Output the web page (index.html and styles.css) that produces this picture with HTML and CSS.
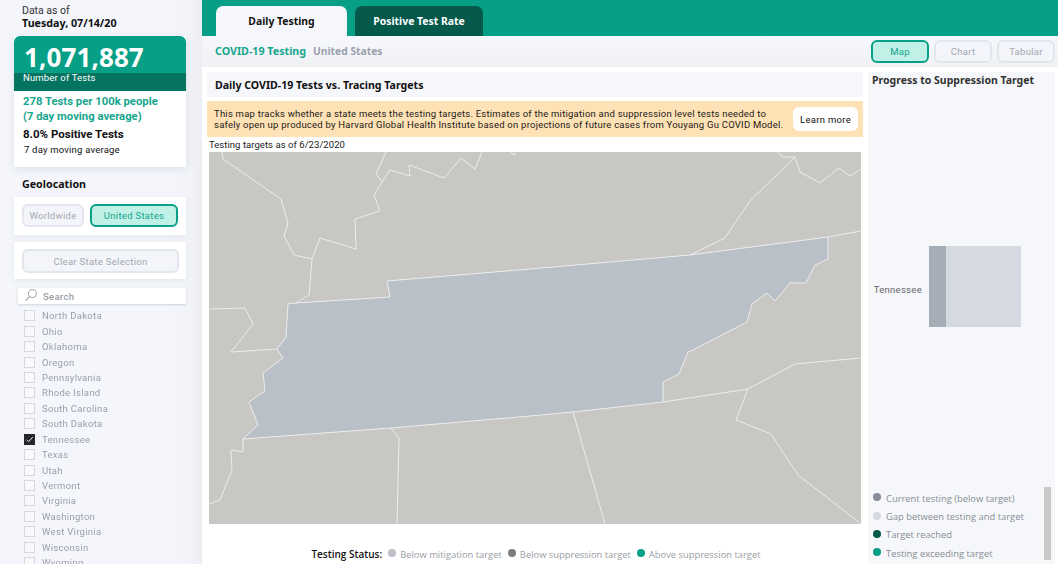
FILE: index.html
```html
<!DOCTYPE html>
<html lang="en">
<head>
<meta charset="utf-8">
<title>COVID-19 Testing</title>
<link rel="stylesheet" href="styles.css">
</head>
<body>
<div class="app">
  <aside class="sidebar">
    <div class="asof">
      <div class="asof-label">Data as of</div>
      <div class="asof-date">Tuesday, 07/14/20</div>
    </div>
    <section class="kpi">
      <div class="kpi-top">
        <div class="kpi-num">1,071,887</div>
        <div class="kpi-band">Number of Tests</div>
      </div>
      <div class="kpi-body">
        <div class="kpi-green">278 Tests per 100k people<br>(7 day moving average)</div>
        <div class="kpi-black">8.0% Positive Tests</div>
        <div class="kpi-small">7 day moving average</div>
      </div>
    </section>
    <h2 class="geo">Geolocation</h2>
    <div class="card geo-btns">
      <button class="btn worldwide">Worldwide</button>
      <button class="btn btn-on us">United States</button>
    </div>
    <div class="card clear-card">
      <button class="btn clear">Clear State Selection</button>
    </div>
    <div class="search">
      <svg class="search-ico" width="14" height="14" viewBox="0 0 14 14"><circle cx="8.5" cy="5.5" r="4" fill="none" stroke="#a9aeb6" stroke-width="1.1"/><path d="M5.6 8.4 1.5 12.8" stroke="#a9aeb6" stroke-width="1.3" fill="none"/></svg>
      <span>Search</span>
    </div>
    <ul class="states">
      <li class="ghost"><i></i></li>
      <li><i></i>North Dakota</li>
      <li><i></i>Ohio</li>
      <li><i></i>Oklahoma</li>
      <li><i></i>Oregon</li>
      <li><i></i>Pennsylvania</li>
      <li><i></i>Rhode Island</li>
      <li><i></i>South Carolina</li>
      <li><i></i>South Dakota</li>
      <li><i class="checked"><svg width="9" height="9" viewBox="0 0 9 9"><path d="M1.5 4.8 3.5 6.8 7.8 2" fill="none" stroke="#e8e8e8" stroke-width="1"/></svg></i>Tennessee</li>
      <li><i></i>Texas</li>
      <li><i></i>Utah</li>
      <li><i></i>Vermont</li>
      <li><i></i>Virginia</li>
      <li><i></i>Washington</li>
      <li><i></i>West Virginia</li>
      <li><i></i>Wisconsin</li>
      <li><i></i>Wyoming</li>
    </ul>
  </aside>
  <main class="main">
    <nav class="tabs">
      <div class="tab tab-on">Daily Testing</div>
      <div class="tab tab-off">Positive Test Rate</div>
    </nav>
    <header class="subhead">
      <div class="crumbs"><span class="crumb-a">COVID-19 Testing</span><span class="crumb-b">United States</span></div>
      <div class="views">
        <button class="btn view btn-on">Map</button>
        <button class="btn view">Chart</button>
        <button class="btn view">Tabular</button>
      </div>
    </header>
    <div class="content">
      <div class="left">
        <h1 class="title">Daily COVID-19 Tests vs. Tracing Targets</h1>
        <div class="notice">
          <p>This map tracks whether a state meets the testing targets. Estimates of the mitigation and suppression level tests needed to safely open up produced by Harvard Global Health Institute based on projections of future cases from Youyang Gu COVID Model.</p>
          <button class="learn">Learn more</button>
        </div>
        <div class="targets">Testing targets as of 6/23/2020</div>
        <svg class="map" viewBox="209 152 652 372" preserveAspectRatio="none">
          <rect x="209" y="152" width="652" height="372" fill="#c8c7c4"/>
          <polygon class="tn" points="288,304 296,303 390,297 387,281 530,269 690,255 828,237 828,259 815,265 806,283 790,283 775,301 767,293 752,304 747,322 693,350 688,352 679,374 663,382 663,402 573,412 530,416 391,428 243,439 258,425 249,402 265,391 263,373 283,358 277,349 286,337"/>
          <polyline class="b" points="222,152 223,159 281,199 288,223 284,236 294,255 312,259 309,295 296,303"/>
          <polyline class="b" points="312,259 320,238 356,249 355,219 380,211 374,195 382,182 390,170 410,176 409,165 444,178 461,158 475,169 482,152"/>
          <polyline class="b" points="386,152 376,174 382,182"/>
          <polyline class="b" points="511,152 514,155 516,152"/>
          <polyline class="b" points="209,309 245,308 253,324 231,352 277,349"/>
          <polyline class="b" points="243,439 243,452 231,450 232,470 220,500 209,504"/>
          <polyline class="b" points="391,428 399,438 397,524"/>
          <polyline class="b" points="573,412 605,524"/>
          <polyline class="b" points="663,402 748,389 795,364 861,358"/>
          <polyline class="b" points="748,389 736,420 771,434 798,475 860,523"/>
          <polyline class="b" points="690,255 725,238 749,202 795,157 800,172 820,183 839,168 850,176 861,169"/>
          <polyline class="b" points="777,152 783,157 795,157"/>
          <polyline class="b" points="828,237 861,231"/>
        </svg>
        <div class="status">
          <strong>Testing Status:</strong>
          <span class="item"><i class="dot d-light"></i>Below mitigation target</span>
          <span class="item"><i class="dot d-grey"></i>Below suppression target</span>
          <span class="item"><i class="dot d-green"></i>Above suppression target</span>
        </div>
      </div>
      <aside class="progress">
        <h2 class="progress-title">Progress to Suppression Target</h2>
        <div class="bar-row">
          <span class="bar-label">Tennessee</span>
          <div class="bar"><div class="bar-a"></div><div class="bar-b"></div></div>
        </div>
        <div class="legend-wrap">
          <ul class="legend">
            <li><i class="dot d-slate"></i>Current testing (below target)</li>
            <li><i class="dot d-pale"></i>Gap between testing and target</li>
            <li><i class="dot d-dark"></i>Target reached</li>
            <li><i class="dot d-green"></i>Testing exceeding target</li>
          </ul>
          <div class="scroll"></div>
        </div>
      </aside>
    </div>
  </main>
</div>
</body>
</html>
```
FILE: styles.css
```css
* { box-sizing: border-box; }
html, body { margin: 0; padding: 0; height: 564px; overflow: hidden; background: #fff; }
body { font-family: "Roboto", "Liberation Sans", sans-serif; color: #111; }
ul { list-style: none; margin: 0; padding: 0; }
h1, h2, p { margin: 0; }
button { font-family: inherit; }
i { display: block; }

.app { display: flex; width: 1058px; height: 564px; }

.sidebar {
  width: 202px; flex: none; height: 564px; overflow: hidden;
  background: linear-gradient(90deg, #f4f6fb 0, #f4f6fb 170px, #f1f3f8 190px, #eceef3 202px);
  padding-top: 5px;
}
.asof { padding-left: 22px; height: 31px; }
.asof-label { font-size: 10.5px; line-height: 12px; color: #333; }
.asof-date { font-size: 10.7px; line-height: 13px; font-weight: 700; font-family: "Noto Sans", sans-serif; }

.kpi { margin-left: 14px; width: 172px; height: 131px; background: #fff; box-shadow: 0 2px 8px rgba(120,130,150,.18); }
.kpi-top { height: 55px; background: #07a086; border-radius: 6px 6px 0 0; color: #fff; overflow: hidden; }
.kpi-num { font-family: "Noto Sans", sans-serif; font-size: 26px; line-height: 26px; height: 37px; font-weight: 700; padding: 8px 0 0 10px; letter-spacing: .1px; }
.kpi-band { height: 18px; background: #04735f; font-size: 9.5px; line-height: 10px; padding-left: 9px; letter-spacing: .15px; }
.kpi-body { padding: 3px 0 0 9px; }
.kpi-green { font-size: 11.3px; line-height: 15px; font-weight: 700; color: #16a68d; }
.kpi-black { font-size: 11.5px; line-height: 16px; font-weight: 700; margin-top: 2px; }
.kpi-small { font-size: 9.5px; line-height: 12px; margin: 2px 0 0 1px; letter-spacing: .2px; }

.geo { font-family: "Noto Sans", sans-serif; font-size: 10.7px; line-height: 14px; font-weight: 700; margin: 10px 0 0 22px; height: 20px; }
.card { margin-left: 14px; width: 172px; background: #fff; box-shadow: 0 2px 6px rgba(120,130,150,.12); }
.geo-btns { height: 38px; display: flex; gap: 6px; padding: 7px 0 0 8px; }
.btn { height: 23px; border: 2px solid #e4e6ee; border-radius: 6px; background: #f4f5fa; color: #a3a8b1; font-size: 9.5px; padding: 0; letter-spacing: .3px; }
.btn-on { background: #c1f0e6; border-color: #0aa088; color: #14a58c; }
.worldwide { width: 62px; }
.us { width: 88px; }
.clear-card { margin-top: 7px; height: 37px; padding: 7px 0 0 8px; }
.clear { width: 157px; height: 24px; }

.search { margin: 9px 0 0 18px; width: 168px; height: 16px; background: #fff; box-shadow: 0 1px 2px rgba(120,130,150,.3); display: flex; align-items: center; gap: 5px; padding-left: 6px; font-size: 9.5px; font-weight: 500; color: #9a9fa8; letter-spacing: .3px; }
.search-ico { flex: none; margin-top: -3px; }

.states { margin-top: -8px; padding-left: 24px; filter: blur(.35px); }
.states li { height: 15.45px; display: flex; align-items: center; gap: 7px; font-size: 9.5px; color: #9a9fa8; letter-spacing: .3px; white-space: nowrap; }
.states li.ghost { height: 7px; align-items: flex-end; margin-top: -2px; margin-bottom: 5px; overflow: hidden; visibility: hidden; }
.states i { width: 11px; height: 11px; flex: none; border: 1px solid #d6d8dd; background: #f8f9fb; }
.states i.checked { background: #26282b; border-color: #26282b; display: flex; align-items: center; justify-content: center; }

.main { flex: 1; min-width: 0; display: flex; flex-direction: column; }
.tabs { height: 36px; background: #07a086; display: flex; gap: 8px; padding: 6px 0 0 14px; flex: none; }
.tab { height: 30px; border-radius: 7px 7px 0 0; font-family: "Noto Sans", sans-serif; font-size: 10.4px; font-weight: 700; display: flex; align-items: center; justify-content: center; }
.tab-on { width: 131px; background: #f5f7fd; color: #111; }
.tab-off { width: 128px; background: #04594a; color: #fff; }

.subhead { height: 31px; flex: none; background: linear-gradient(180deg, #f7f8fd, #f0f1f5); display: flex; justify-content: space-between; padding: 4px 3px 0 13px; }
.crumbs { display: flex; gap: 7px; align-items: baseline; font-family: "Noto Sans", sans-serif; font-weight: 700; padding-top: 4px; }
.crumb-a { font-size: 10.7px; color: #16a68d; }
.crumb-b { font-size: 10.3px; color: #9aa1ac; }
.views { display: flex; gap: 5px; }
.view { width: 58px; height: 23px; font-size: 9.5px; }

.content { flex: 1; min-height: 0; display: flex; padding: 5px 3px 0 5px; gap: 5px; }
.left { width: 656px; flex: none; display: flex; flex-direction: column; }
.title { height: 25px; background: #f5f7fb; font-family: "Noto Sans", sans-serif; font-size: 10.6px; line-height: 26px; font-weight: 700; padding-left: 8px; }
.notice { margin-top: 4px; height: 36px; background: #fee1b4; display: flex; align-items: center; justify-content: space-between; padding: 0 5px 0 7px; }
.notice p { width: 572px; font-size: 9.5px; line-height: 11px; letter-spacing: .23px; color: #1a1a1a; }
.learn { width: 65px; height: 24px; border: 0; border-radius: 6px; background: #fff; font-size: 9.5px; letter-spacing: .3px; color: #111; padding: 0; }
.targets { height: 15px; font-size: 9.5px; line-height: 15px; padding-left: 2px; letter-spacing: .05px; color: #222; }
.map { display: block; width: 652px; height: 372px; margin-left: 2px; flex: none; }
.tn { fill: #bac0c8; stroke: #ecedec; stroke-width: 1; }
.b { fill: none; stroke: #ecedec; stroke-width: 1; }

.status { display: flex; justify-content: center; align-items: center; margin-top: 23px; padding-left: 2px; gap: 6px; font-size: 9.4px; color: #9a9ea5; white-space: nowrap; font-family: "Open Sans", sans-serif; }
.status strong { font-size: 10px; font-weight: 600; color: #111; }
.item { display: flex; align-items: center; gap: 4px; }
.dot { width: 8px; height: 8px; border-radius: 50%; flex: none; margin-top: -2px; }
.d-light { background: #bac0c8; }
.d-grey { background: #7a7e83; }
.d-green { background: #07a086; }
.d-slate { background: #878c98; }
.d-pale { background: #d5d9e2; }
.d-dark { background: #04594a; }

.progress { width: 187px; flex: none; background: #f5f7fb; display: flex; flex-direction: column; height: 492px; }
.progress-title { font-family: "Noto Sans", sans-serif; font-size: 10.5px; line-height: 16px; font-weight: 700; color: #333; padding-left: 4px; }
.bar-row { display: flex; align-items: center; gap: 7px; margin-top: 158px; height: 81px; }
.bar-label { width: 54px; text-align: right; font-size: 9.5px; color: #666; letter-spacing: .3px; padding-top: 5px; }
.bar { display: flex; width: 92px; height: 81px; }
.bar-a { width: 17px; background: #a5adb7; }
.bar-b { flex: 1; background: #d5d9e2; }
.legend-wrap { display: flex; justify-content: space-between; margin-top: auto; padding: 0 4px 4px 5px; height: 77px; }
.legend { padding-top: 2px; }
.legend li { height: 18.4px; display: flex; align-items: center; gap: 5px; font-family: "Open Sans", sans-serif; font-size: 9.4px; color: #8a8e95; white-space: nowrap; }
.scroll { width: 7px; height: 73px; background: #c8c8c8; }
```
